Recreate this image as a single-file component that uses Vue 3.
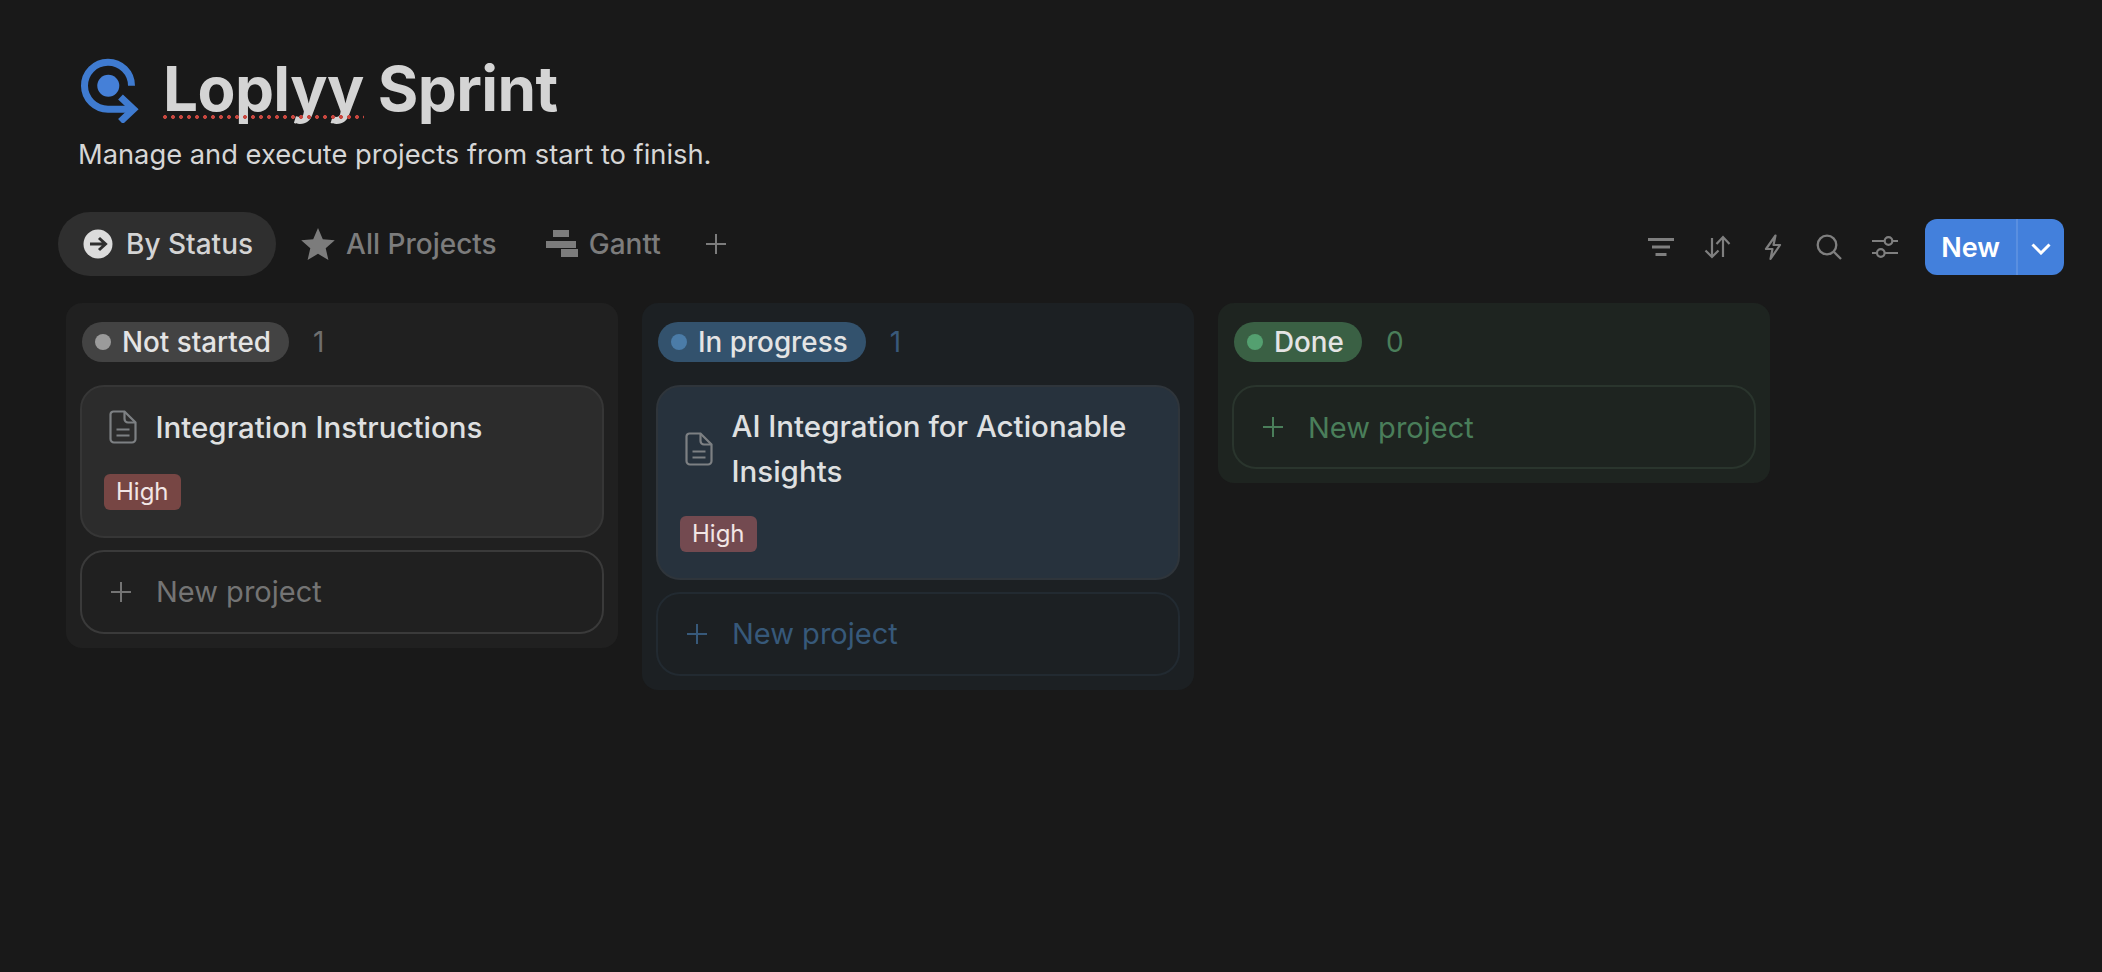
<template>
  <div class="page">
    <header class="head">
      <div class="title-row">
        <svg class="logo" width="60" height="70" viewBox="0 0 60 70" fill="none" stroke="#3f7bd0" stroke-width="7">
          <path d="M52.5 32.7A23.5 23.5 0 1 0 29.3 56.2H54" />
          <path d="M41.5 44L54.5 56.2L41.5 68.5" />
          <circle cx="29.3" cy="32.7" r="11" fill="#4580d8" stroke="none" />
        </svg>
        <h1 class="title"><span class="misspelt">Loplyy</span> Sprint</h1>
      </div>
      <p class="sub">Manage and execute projects from start to finish.</p>
    </header>

    <div class="toolbar">
      <nav class="tabs">
        <div class="tab active">
          <svg width="30" height="30" viewBox="0 0 30 30">
            <circle cx="15" cy="15" r="14.5" fill="#dcdcdc" />
            <path d="M7 15H22M16 9l6.500 6l-6.500 6" fill="none" stroke="#2f2f2f" stroke-width="3" />
          </svg>
          <span>By Status</span>
        </div>
        <div class="tab star">
          <svg width="34" height="34" viewBox="0 0 34 34">
            <path d="M17 1l4.800 11.200l12 1.100l-9.100 7.900l2.700 11.800L17 26.800L6.600 33l2.700-11.800L.2 13.300l12-1.100z" fill="#7c7c7c" />
          </svg>
          <span>All Projects</span>
        </div>
        <div class="tab gantt">
          <svg width="32" height="28" viewBox="0 0 32 28" fill="#7c7c7c">
            <rect x="7" y="0" width="16" height="7" />
            <rect x="0" y="11" width="30" height="7" />
            <rect x="15" y="19" width="17" height="8" />
          </svg>
          <span>Gantt</span>
        </div>
        <svg class="add" width="22" height="22" viewBox="0 0 22 22" stroke="#7c7c7c" stroke-width="2">
          <path d="M11 1V21M1 11H21" />
        </svg>
      </nav>

      <div class="actions">
        <div class="tools">
          <svg width="28" height="28" viewBox="0 0 28 28" fill="none" stroke="#7f7f7f" stroke-width="3">
            <path d="M1 6.500H27M5 14H23M8.500 21.500H19.500" />
          </svg>
          <svg width="28" height="28" viewBox="0 0 28 28" fill="none" stroke="#7f7f7f" stroke-width="2.200">
            <path d="M9 5V24M2.500 17.500L9 24L15.500 17.500M20 24V4M13.500 11L20 4L26.500 11" />
          </svg>
          <svg width="28" height="28" viewBox="0 0 28 28" fill="none" stroke="#7f7f7f" stroke-width="2.200" stroke-linejoin="round">
            <path d="M16.500 2.500L7 16H13.500L11.500 26L21 12H14.500Z" />
          </svg>
          <svg width="28" height="28" viewBox="0 0 28 28" fill="none" stroke="#7f7f7f" stroke-width="2.300">
            <circle cx="12" cy="12" r="9.300" />
            <path d="M18.800 18.800L26 26" />
          </svg>
          <svg width="28" height="28" viewBox="0 0 28 28" fill="none" stroke="#7f7f7f" stroke-width="2.200">
            <path d="M1 8H13M21.500 8H27M1 20H5.500M14 20H27" />
            <circle cx="17.500" cy="8" r="3.800" />
            <circle cx="9.800" cy="20" r="3.800" />
          </svg>
        </div>
        <div class="new-btn">
          <span class="new-label">New</span>
          <span class="new-caret">
            <svg width="20" height="12" viewBox="0 0 20 12" fill="none" stroke="#fff" stroke-width="3">
              <path d="M1.500 1.500L10 10L18.500 1.500" />
            </svg>
          </span>
        </div>
      </div>
    </div>

    <main class="board">
      <section v-for="col in columns" :key="col.name" class="col" :class="col.cls">
        <div class="col-head">
          <span class="pill"><i class="dot"></i>{{ col.name }}</span>
          <span class="count">{{ col.items.length }}</span>
        </div>
        <article v-for="item in col.items" :key="item" class="card">
          <div class="card-row">
            <svg class="doc" width="28" height="34" viewBox="0 0 28 34" fill="none" stroke="#7d8083" stroke-width="2.200">
              <path d="M4.500 1.500H15.500L26.500 12.500V29A3.500 3.500 0 0 1 23 32.500H5A3.500 3.500 0 0 1 1.500 29V4.500A3 3 0 0 1 4.500 1.500Z" />
              <path d="M15.500 1.500V9A3.500 3.500 0 0 0 19 12.500H26.500M7.500 19.500H20.500M7.500 25.500H20.500" />
            </svg>
            <span class="card-title">{{ item }}</span>
          </div>
          <span class="tag">High</span>
        </article>
        <div class="add-card">
          <svg width="22" height="22" viewBox="0 0 22 22" stroke="currentColor" stroke-width="2">
            <path d="M11 1V21M1 11H21" />
          </svg>
          <span>New project</span>
        </div>
      </section>
    </main>
  </div>
</template>

<script setup>
const columns = [
  { name: 'Not started', cls: 'gray', items: ['Integration Instructions'] },
  { name: 'In progress', cls: 'blue', items: ['AI Integration for Actionable Insights'] },
  { name: 'Done', cls: 'green', items: [] }
]
</script>

<style scoped>
.page {
  min-height: 972px;
  box-sizing: border-box;
  padding: 50px 38px 0 58px;
  background: #191919;
  font-family: Inter, "Liberation Sans", sans-serif;
  color: #d4d4d4;
}

.head {
  padding-left: 21px;
}

.title-row {
  display: flex;
  align-items: center;
  height: 76px;
}

.logo {
  flex: none;
}

.title {
  margin: 2px 0 0 24px;
  font-size: 62px;
  line-height: 76px;
  font-weight: 700;
  letter-spacing: -0.6px;
}

.misspelt {
  position: relative;
}

.misspelt::after {
  content: "";
  position: absolute;
  left: 0;
  right: 0;
  bottom: 7px;
  height: 4px;
  background: radial-gradient(circle at 2px 2px, #c8473f 1.8px, transparent 2.2px) 0 0 / 8px 4px repeat-x;
}

.sub {
  margin: 9px 0 0 -1px;
  font-size: 27.3px;
  line-height: 40px;
  color: #d6d6d6;
}

.toolbar {
  display: flex;
  justify-content: space-between;
  align-items: center;
  margin-top: 37px;
  height: 64px;
}

.tabs {
  display: flex;
  align-items: center;
}

.tab {
  display: flex;
  align-items: center;
  gap: 13px;
  height: 64px;
  padding: 0 23px 0 25px;
  border-radius: 32px;
  font-size: 28px;
  font-weight: 500;
  color: #7c7c7c;
}

.tab.active {
  background: #2f2f2f;
  color: #d4d4d4;
}

.star {
  gap: 11px;
}

.gantt {
  gap: 11px;
  margin-left: 1px;
}

.add {
  margin-left: 21px;
}

.actions {
  display: flex;
  align-items: center;
  gap: 26px;
  padding-top: 6px;
}

.tools {
  display: flex;
  align-items: center;
  gap: 28px;
}

.new-btn {
  display: flex;
  width: 139px;
  height: 56px;
  border-radius: 12px;
  background: #4380dc;
  color: #fff;
  font-size: 27px;
  font-weight: 600;
  overflow: hidden;
}

.new-label {
  width: 91px;
  display: flex;
  align-items: center;
  justify-content: center;
  border-right: 2px solid #5a8fe0;
}

.new-caret {
  flex: 1;
  display: flex;
  align-items: center;
  justify-content: center;
  padding-top: 3px;
}

.board {
  display: flex;
  gap: 24px;
  align-items: flex-start;
  margin: 27px 0 0 8px;
}

.col {
  width: 552px;
  box-sizing: border-box;
  padding: 19px 14px 14px;
  border-radius: 16px;
}

.col-head {
  display: flex;
  align-items: center;
  height: 40px;
  margin: 0 0 23px 2px;
  gap: 24px;
}

.pill {
  display: inline-flex;
  align-items: center;
  gap: 11px;
  height: 40px;
  padding: 0 18px 0 13px;
  border-radius: 20px;
  font-size: 27.8px;
  font-weight: 500;
  color: #e4e4e4;
}

.dot {
  width: 16px;
  height: 16px;
  border-radius: 50%;
}

.count {
  font-size: 28px;
}

.card {
  box-sizing: border-box;
  padding: 17px 22px 25.5px;
  margin-bottom: 12px;
  border: 2px solid;
  border-radius: 24px;
}

.card-row {
  display: flex;
  align-items: center;
  gap: 18.5px;
  min-height: 48px;
  margin-bottom: 22px;
  padding-left: 5px;
}

.gray .card-row {
  min-height: 46px;
  margin-bottom: 24px;
}

.card-title {
  font-size: 29.5px;
  line-height: 45px;
  font-weight: 500;
  color: #dfe0e1;
}

.doc {
  flex: none;
}

.tag {
  display: block;
  width: fit-content;
  height: 36px;
  line-height: 36px;
  padding: 0 12px;
  border-radius: 6px;
  background: #774644;
  color: #f2e6e5;
  font-size: 24px;
}

.add-card {
  display: flex;
  align-items: center;
  gap: 24px;
  height: 84px;
  box-sizing: border-box;
  padding-left: 28px;
  border: 2px solid;
  border-radius: 24px;
  font-size: 29px;
}

.gray { background: #202020; }
.gray .pill { background: #434343; }
.gray .dot { background: #9b9b9b; }
.gray .count { color: #6f6f6f; }
.gray .card { background: #2c2c2c; border-color: #363636; }
.gray .add-card { border-color: #3a3a3a; color: #747474; }

.blue { background: #1c2023; }
.blue .pill { background: #33526d; }
.blue .dot { background: #4b7ca8; }
.blue .count { color: #39597a; }
.blue .card { background: #27323d; border-color: #2f353b; }
.blue .tag { background: #734a50; }
.blue .add-card { border-color: #222a31; color: #37597a; }

.green { background: #1e2420; }
.green .pill { background: #3a6044; }
.green .dot { background: #54a070; }
.green .count { color: #4a7e5a; }
.green .add-card { border-color: #2a352d; color: #4a7e5a; }
</style>

<style>
html, body { background: #191919; }
</style>
